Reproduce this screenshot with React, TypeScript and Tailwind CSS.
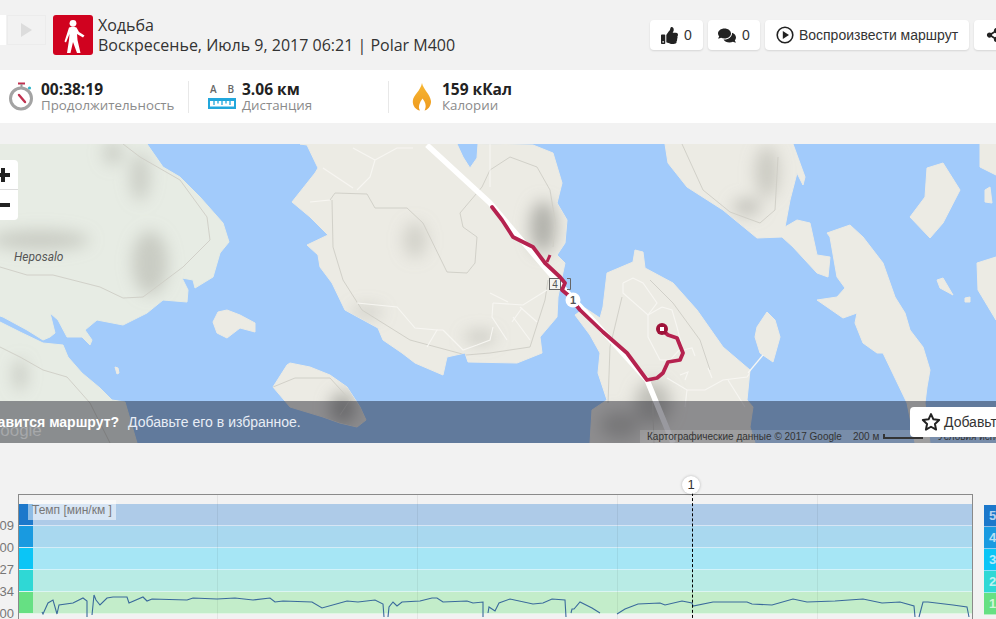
import React from "react";
import { FaThumbsUp, FaComments, FaShareAlt } from "react-icons/fa";

const lands = [
  "307,145 318,168 315,173 292,202 310,217 328,235 307,245 318,255 320,267 332,283 345,310 378,328 383,340 402,353 415,363 443,375 447,357 465,353 468,362 517,363 542,353 540,337 557,317 558,297 562,277 565,263 557,255 565,243 567,220 557,203 562,183 553,153 533,145 478,144 477,158 470,168 463,157 457,144 300,144",
  "665,144 668,163 687,187 723,210 757,238 782,237 793,247 817,273 828,277 830,257 817,255 810,223 797,220 785,227 790,200 797,173 803,185 805,177 793,144",
  "827,233 850,225 863,237 883,263 895,297 905,313 910,330 923,347 930,370 927,387 925,403 930,443 915,443 907,403 883,353 877,353 863,343 855,323 857,313 843,318 817,300 837,297 845,288 837,277 830,237",
  "927,168 943,163 960,190 943,223 930,238 910,217 925,197",
  "980,144 980,167 996,175 996,144",
  "985,190 990,187 992,203 985,202",
  "977,263 996,257 996,320 978,290",
  "937,280 943,278 953,295 940,288",
  "965,298 970,297 970,302 965,302",
  "757,327 767,312 775,320 780,337 773,362 760,353 755,337",
  "607,273 633,262 635,250 643,252 645,268 673,283 697,310 723,347 750,370 747,400 753,407 750,427 755,443 590,443 592,410 607,400 598,373 600,353 590,335 575,315 585,308 600,318 603,307",
  "213,322 218,312 227,310 240,315 255,323 255,332 240,328 227,338 217,333",
  "115,367 118,368 119,373 117,374",
  "273,387 287,365 290,363 310,367 330,375 347,387 360,407 366,420 357,427 340,423 323,417 290,407",
];

const greenLands = [
  "0,144 147,144 163,167 180,177 200,197 223,223 229,242 220,253 213,277 195,288 193,280 182,278 188,290 187,302 163,300 147,313 123,325 97,320 85,330 92,340 90,345 82,337 67,337 58,320 50,313 55,333 50,337 43,340 27,330 3,317 0,316",
  "0,322 20,332 43,343 63,345 68,357 82,373 100,388 112,400 125,402 137,443 0,443",
];

const shades = [
  { cx: 40, cy: 240, rx: 50, ry: 10, fillOpacity: 0.45 },
  { cx: 150, cy: 263, rx: 18, ry: 32, fillOpacity: 0.45 },
  { cx: 140, cy: 177, rx: 10, ry: 24, fillOpacity: 0.4 },
  { cx: 113, cy: 153, rx: 10, ry: 12, fillOpacity: 0.4 },
  { cx: 20, cy: 375, rx: 6, ry: 16, fillOpacity: 0.5 },
  { cx: 415, cy: 240, rx: 12, ry: 18, fillOpacity: 0.35 },
  { cx: 543, cy: 227, rx: 13, ry: 26, fillOpacity: 0.8 },
  { cx: 480, cy: 337, rx: 16, ry: 6, fillOpacity: 0.5 },
  { cx: 367, cy: 312, rx: 16, ry: 6, fillOpacity: 0.4 },
  { cx: 747, cy: 207, rx: 14, ry: 8, fillOpacity: 0.6 },
  { cx: 767, cy: 172, rx: 12, ry: 26, fillOpacity: 0.45 },
  { cx: 343, cy: 408, rx: 13, ry: 16, fillOpacity: 0.8 },
  { cx: 653, cy: 403, rx: 18, ry: 22, fillOpacity: 0.6 },
  { cx: 620, cy: 425, rx: 20, ry: 14, fillOpacity: 0.5 },
];

const contours = [
  "330,200 335,193 367,194 375,208 407,208 423,223 447,272 467,273 475,263 477,237 463,227 460,213 482,187 490,170 510,157 537,167 550,190 555,220 553,247",
  "332,200 333,247 343,280 362,310 410,340 466,355 490,353 530,347 545,300 548,280",
  "650,280 673,303 700,340 710,370",
  "622,297 610,347 608,403",
  "682,144 703,190 730,212 760,223 775,210 778,157",
  "652,383 654,443",
  "0,267 27,275 53,275 100,287 123,298 143,297 183,267 210,240 207,217 180,180 140,157 123,144",
  "0,347 20,357 43,370 67,377 90,403 110,443",
  "273,387 295,378 330,378 350,400 340,415",
];

const roads = [
  "490,293 508,302",
  "493,303 523,305 547,290",
  "493,303 492,317 507,340",
  "443,330 463,350 477,345 490,340 493,327",
  "357,303 397,307 415,328 437,330 427,347",
  "443,330 437,330",
  "520,307 537,322",
  "512,322 522,308",
  "513,317 530,340",
  "375,160 397,148 413,148",
  "375,160 370,177 357,190",
  "323,168 353,188",
  "353,148 375,160",
  "310,202 330,200",
  "490,144 490,187",
  "623,283 633,278 643,283 657,303 648,315 623,293 623,283",
  "662,307 672,310 677,327 682,347 670,360 660,360 648,337 648,315 662,307",
  "667,378 687,390 705,390 723,380 747,377 763,355",
  "728,380 745,407",
  "687,390 685,407",
  "683,350 692,348 695,356",
  "680,375 688,372 685,380",
  "708,368 712,378",
];

const track =
  "492,207 502,220 513,237 533,247 545,263 560,277 565,283 562,290 568,295 580,310 603,332 627,353 647,380 657,378 663,373 668,362 680,360 683,353 677,338 668,335 662,330";

const pace = [
  "42,612 43,614 48,603 53,600 57,614 59,605 73,603 83,598 87,601 87,617",
  "92,615 94,595 96,600 100,605 107,598 113,597 127,597 129,603 143,597 147,601 152,599 187,600 193,598 217,599 235,598 253,600 270,598 275,602 283,601 312,602 322,608 347,601 358,602 375,600 383,604 384,617",
  "388,617 389,607 393,602 397,606 402,602 420,601 432,598 437,598 443,602 467,601 473,603 483,602 483,617",
  "488,613 489,607 495,611 499,603 510,599 533,604 543,603 552,599 565,600 566,617",
  "571,613 572,609 574,609 580,602 592,608 600,613",
  "617,614 625,609 638,604 660,603 665,605 682,601 692,603 693,606 713,602 747,602 752,604 772,605 793,599 807,602 835,601 863,599 882,603 900,602 914,606 915,617",
  "919,617 923,602 928,602 953,605 967,607 969,617",
];

const bands = [
  { strip: "bg-[#1c78cb]", fill: "bg-[#aecbe8]", axis: "09", zone: 5 },
  { strip: "bg-[#199ae0]", fill: "bg-[#a9d8ef]", axis: "00", zone: 4 },
  { strip: "bg-[#0bc5f6]", fill: "bg-[#a6e6f5]", axis: "27", zone: 3 },
  { strip: "bg-[#2fd8d5]", fill: "bg-[#b8ebe5]", axis: "34", zone: 2 },
  { strip: "bg-[#66e083]", fill: "bg-[#c3edca]", axis: "00", zone: 1 },
];

function MapCanvas() {
  return (
    <svg width="996" height="299" viewBox="0 144 996 299" className="block">
      <defs>
        <filter id="soft" x="-80%" y="-80%" width="260%" height="260%">
          <feGaussianBlur stdDeviation="8" />
        </filter>
        <clipPath id="land">
          {[...lands, ...greenLands].map((p, i) => (
            <polygon key={i} points={p} />
          ))}
        </clipPath>
      </defs>
      <rect x="0" y="144" width="996" height="299" fill="#a2cbfb" />
      {greenLands.map((p, i) => (
        <polygon key={i} points={p} fill="#e7ece4" stroke="#e7ece4" strokeWidth="1" strokeLinejoin="round" />
      ))}
      {lands.map((p, i) => (
        <polygon key={i} points={p} fill="#ecebe4" stroke="#ecebe4" strokeWidth="1" strokeLinejoin="round" />
      ))}
      <g clipPath="url(#land)">
        <g filter="url(#soft)" fill="#a3a39c">
          {shades.map((s, i) => (
            <ellipse key={i} {...s} />
          ))}
        </g>
        {contours.map((p, i) => (
          <polyline key={i} points={p} fill="none" stroke="#cecdc5" strokeWidth="0.9" />
        ))}
        {roads.map((p, i) => (
          <polyline key={i} points={p} fill="none" stroke="#f7f6f2" strokeWidth="1.1" />
        ))}
      </g>
      <polyline points="763,355 748,373" fill="none" stroke="#f8f7f3" strokeWidth="1.2" />
      <polyline points="427,145 490,203 547,270 577,303 590,317 647,380 673,443" fill="none" stroke="#ffffff" strokeWidth="5.5" />
      <rect x="549.5" y="278.5" width="11" height="11" fill="#f4f4f0" stroke="#666" />
      <text x="555" y="288" textAnchor="middle" fontSize="10" fill="#555" fontFamily="Liberation Sans">4</text>
      <polyline points="567,278.5 570.5,278.5 570.5,289.5 567,289.5" fill="none" stroke="#666" />
      <polyline points={track} fill="none" stroke="#b5224f" strokeWidth="3.8" strokeLinejoin="round" strokeLinecap="round" />
      <polyline points="547,262 550,255" fill="none" stroke="#b5224f" strokeWidth="3" />
      <circle cx="573" cy="300" r="7.5" fill="#fff" />
      <text x="573" y="304" textAnchor="middle" fontSize="11" fontWeight="700" fill="#555" fontFamily="Liberation Sans">1</text>
      <circle cx="662" cy="329" r="6" fill="#9f1239" />
      <rect x="660" y="327" width="4" height="4" fill="#fff" />
      <text x="14" y="261" fontSize="12" fontStyle="italic" fill="#555" fontFamily="Roboto">Heposalo</text>
    </svg>
  );
}

function PlayRing() {
  return (
    <svg width="18" height="18" viewBox="0 0 18 18">
      <circle cx="9" cy="9" r="7.8" fill="none" stroke="#222" strokeWidth="1.6" />
      <path d="M6.8 5 L13 9 L6.8 13 Z" fill="#222" />
    </svg>
  );
}

function Walker() {
  return (
    <svg width="40" height="40" viewBox="0 0 40 40">
      <rect width="40" height="40" rx="3" fill="#d0021f" />
      <circle cx="20" cy="8.300" r="3.400" fill="#fff" />
      <path d="M16 12.500 Q20 11 23.500 12.500 L26 17 L31.500 20.500 L30 22.500 L24 19 L24.500 25 L27.500 38 L24 38 L20 27 L17.500 38 L14 38 L16 25 L16.500 19 L13 27.500 L11.500 26.500 Z" fill="#fff" />
    </svg>
  );
}

function Stopwatch() {
  return (
    <svg width="26" height="30" viewBox="0 0 26 30">
      <rect x="10" y="0.500" width="7" height="2" fill="#c0304e" />
      <rect x="12.500" y="2" width="2" height="3" fill="#999" />
      <circle cx="21.500" cy="6" r="1.600" fill="#2fb5c9" />
      <circle cx="13" cy="16.500" r="10.500" fill="#fff" stroke="#a3a3a3" strokeWidth="3" />
      <path d="M11 13 L17 20" stroke="#c0304e" strokeWidth="2.400" strokeLinecap="round" />
    </svg>
  );
}

function Ruler() {
  return (
    <svg width="28" height="11" viewBox="0 0 28 11" className="block">
      <rect width="28" height="11" fill="#22a7dc" />
      <rect x="2" y="3" width="24" height="5.500" fill="#fff" />
      <path d="M6 3v4M10 3v2.500M14 3v4M18 3v2.500M22 3v4" stroke="#22a7dc" strokeWidth="1.300" />
    </svg>
  );
}

function Flame() {
  return (
    <svg width="20" height="28" viewBox="0 0 20 28">
      <defs>
        <linearGradient id="flame" x1="0" y1="0" x2="0" y2="1">
          <stop offset="0" stopColor="#f7b733" />
          <stop offset="1" stopColor="#ee9a1e" />
        </linearGradient>
      </defs>
      <path
        d="M10 0 C11 6 18 11 19 18 C19.500 23 15 27.500 12.500 27.500 C14.500 24 14 20 10.500 15.500 C8 19 5.500 24 8 27.500 C4 27 0.500 23 0.800 18 C1.200 12 8.500 8 10 0 Z"
        fill="url(#flame)"
      />
    </svg>
  );
}

function Chip({ children }: { children: React.ReactNode }) {
  return (
    <div className="flex h-[30px] shrink-0 items-center rounded bg-white text-[#333] shadow-[0_1px_2px_rgba(0,0,0,0.12)]">
      {children}
    </div>
  );
}

function Stat({ icon, value, label, className }: { icon: React.ReactNode; value: string; label: string; className: string }) {
  return (
    <div className={`flex items-center ${className}`}>
      {icon}
      <div className="flex flex-col">
        <span className="text-[15.5px] font-bold leading-[16px] text-[#222]">{value}</span>
        <span className="text-[13.3px] leading-[16px] text-[#8b8b8b]">{label}</span>
      </div>
    </div>
  );
}

export default function App() {
  return (
    <div className="h-[619px] w-[996px] overflow-hidden bg-[#f2f2f2] font-['Open_Sans',sans-serif]">
      {/* header */}
      <div className="flex h-[70px] w-[1040px] items-start pt-[15px]">
        <div className="h-[30px] w-[6px] bg-white" />
        <div className="ml-px flex h-[30px] w-[39px] items-center justify-center border border-[#ececec]">
          <div className="h-0 w-0 border-y-[7px] border-l-[11px] border-y-transparent border-l-[#dcdcdc]" />
        </div>
        <div className="ml-[7px]">
          <Walker />
        </div>
        <div className="ml-[5px] flex w-[360px] flex-col text-[16px] leading-[20px] text-[#333]">
          <span>Ходьба</span>
          <span>Воскресенье, Июль 9, 2017 06:21 | Polar M400</span>
        </div>
        <div className="ml-[192px] mt-[5px] flex gap-[5px] font-['Liberation_Sans',sans-serif] text-[14px]">
          <Chip>
            <div className="flex w-[53px] items-center justify-center gap-[6px]">
              <FaThumbsUp className="h-[17px] w-[17px] text-[#222]" />
              <span>0</span>
            </div>
          </Chip>
          <Chip>
            <div className="flex w-[52px] items-center justify-center gap-[6px]">
              <FaComments className="h-[17px] w-[18px] text-[#222]" />
              <span>0</span>
            </div>
          </Chip>
          <Chip>
            <div className="flex w-[204px] items-center justify-center gap-[5px]">
              <PlayRing />
              <span>Воспроизвести маршрут</span>
            </div>
          </Chip>
          <Chip>
            <div className="flex w-[53px] items-center pl-[12px]">
              <FaShareAlt className="h-[14px] w-[14px] text-[#222]" />
            </div>
          </Chip>
        </div>
      </div>

      {/* stats */}
      <div className="flex h-[53px] items-center bg-white">
        <Stat className="w-[188px] gap-[7px] pl-[8px]" icon={<Stopwatch />} value="00:38:19" label="Продолжительность" />
        <div className="h-[32px] w-px bg-[#e8e8e8]" />
        <Stat
          className="w-[199px] gap-[6px] pl-[19px]"
          icon={
            <div className="flex w-[28px] flex-col gap-[3px]">
              <div className="flex justify-between px-[2px] text-[10px] font-semibold leading-[11px] text-[#666]">
                <span>A</span>
                <span>B</span>
              </div>
              <Ruler />
            </div>
          }
          value="3.06 км"
          label="Дистанция"
        />
        <div className="h-[32px] w-px bg-[#e8e8e8]" />
        <Stat className="gap-[10px] pl-[23px]" icon={<Flame />} value="159 кКал" label="Калории" />
      </div>

      {/* map */}
      <div className="relative mt-[21px] h-[299px] overflow-hidden">
        <MapCanvas />
        <div className="absolute left-0 top-[16px] flex h-[60px] w-[18px] flex-col overflow-hidden rounded-r bg-white">
          <div className="relative h-[30px] border-b border-[#ddd]">
            <div className="absolute -left-[4px] top-[13px] h-[4px] w-[14px] bg-[#222]" />
            <div className="absolute left-px top-[8px] h-[14px] w-[4px] bg-[#222]" />
          </div>
          <div className="relative h-[30px]">
            <div className="absolute -left-[4px] top-[13px] h-[4px] w-[14px] bg-[#222]" />
          </div>
        </div>
        <div className="absolute bottom-0 left-0 right-0 flex h-[42px] items-center bg-[rgba(0,0,14,0.4)] font-['Liberation_Sans',sans-serif] text-[14px] text-white">
          <span className="-ml-[38px] font-bold">Понравится маршрут?</span>
          <span className="ml-[9px] text-[#e8edf5]">Добавьте его в избранное.</span>
        </div>
        <span className="absolute bottom-[2px] left-[-13px] font-['Liberation_Sans',sans-serif] text-[17px] leading-[20px] text-white/25">Google</span>
        <div className="absolute bottom-0 right-0 flex h-[13px] w-[356px] items-center whitespace-nowrap bg-white/15 pl-[7px] font-['Liberation_Sans',sans-serif] text-[10px] text-[#333]">
          <span className="w-[206px] shrink-0">Картографические данные © 2017 Google</span>
          <span className="w-[30px] shrink-0">200 м</span>
          <span className="h-[5px] w-[40px] shrink-0 border-x-2 border-b-2 border-[#333]" />
          <span className="ml-[15px] shrink-0">Условия использования</span>
        </div>
        <div className="absolute bottom-[6px] left-[910px] flex h-[30px] w-[100px] items-center gap-[3px] rounded-l bg-white pl-[11px] font-['Liberation_Sans',sans-serif] text-[14px] text-[#333]">
          <svg width="20" height="20" viewBox="0 0 24 24" className="shrink-0">
            <path d="M12 2.500l2.900 6.300 6.900.8-5.100 4.700 1.400 6.800-6.100-3.400-6.100 3.400 1.400-6.800L2.200 9.600l6.900-.8z" fill="none" stroke="#222" strokeWidth="2.400" strokeLinejoin="round" />
          </svg>
          <span className="whitespace-nowrap">Добавьте</span>
        </div>
      </div>

      {/* chart */}
      <div className="mt-[51px] flex font-['Liberation_Sans',sans-serif]">
        <div className="flex w-[18px] flex-col overflow-hidden pt-[21px] text-[13px] text-[#777]">
          {bands.map((b, i) => (
            <div key={i} className="flex h-[22px] items-center justify-end pr-[4px]">
              {b.axis}
            </div>
          ))}
        </div>
        <div className="relative h-[125px] w-[955px] border-x border-t border-[#8a8a8a] pt-[9px]">
          <div className="flex flex-col">
            {bands.map((b, i) => (
              <div key={i} className={`flex h-[22px] border-b border-white/50 ${b.fill}`}>
                <div className={`w-[14px] ${b.strip}`} />
              </div>
            ))}
          </div>
          <div className="absolute left-[198px] top-0 h-full w-px bg-black/[0.06]" />
          <div className="absolute left-[398px] top-0 h-full w-px bg-black/[0.06]" />
          <div className="absolute left-[598px] top-0 h-full w-px bg-black/[0.06]" />
          <div className="absolute left-[798px] top-0 h-full w-px bg-black/[0.06]" />
          <div className="absolute left-[9px] top-[5px] bg-white/50 px-[4px] text-[12px] leading-[20px] text-[#777]">Темп [мин/км ]</div>
          <svg width="955" height="125" viewBox="18 494 955 125" className="absolute -left-px -top-px">
            {pace.map((p, i) => (
              <polyline key={i} points={p} fill="none" stroke="#3a6a9c" strokeWidth="1.1" />
            ))}
          </svg>
          <div className="absolute left-[673px] top-[-2px] h-[130px] border-l border-dashed border-black" />
          <div className="absolute left-[663px] top-[-19px] flex h-[18px] w-[18px] items-center justify-center rounded-full bg-white text-[13px] text-[#333] shadow-[0_0_3px_rgba(0,0,0,0.25)]">1</div>
        </div>
        <div className="ml-[11px] flex w-[12px] flex-col pt-[11px]">
          {bands.map((b, i) => (
            <div key={i} className={`flex h-[22px] items-center border-b border-white/50 pl-[5px] text-[13px] font-bold leading-none text-white/70 ${b.strip}`}>
              {b.zone}
            </div>
          ))}
        </div>
      </div>
    </div>
  );
}
